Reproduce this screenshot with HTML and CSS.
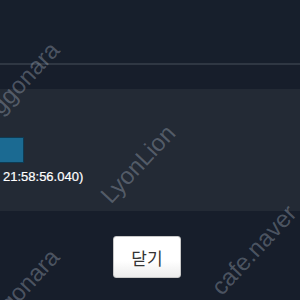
FILE: index.html
```html
<!DOCTYPE html>
<html lang="ko">
<head>
<meta charset="utf-8">
<link rel="stylesheet" href="styles.css">
</head>
<body>
<div class="modal">
  <div class="modal-header"></div>
  <div class="divider"></div>
  <div class="modal-body">
    <div class="panel">
      <div class="swatch"></div>
      <div class="time">21:58:56.040)</div>
    </div>
  </div>
  <div class="modal-footer">
    <button class="btn-close">닫기</button>
  </div>
</div>
<span class="wm wm-1">ggonara</span>
<span class="wm wm-2">LyonLion</span>
<span class="wm wm-3">cafe.naver</span>
<span class="wm wm-4">ggonara</span>
</body>
</html>
```
FILE: styles.css
```css
html, body {
  margin: 0;
  padding: 0;
}
body {
  width: 300px;
  height: 300px;
  overflow: hidden;
  position: relative;
  background: #171e2b;
  font-family: "Liberation Sans", "Noto Sans CJK KR", sans-serif;
}
.modal {
  display: flex;
  flex-direction: column;
}
.modal-header {
  height: 63px;
  background: #171f2c;
}
.divider {
  height: 2px;
  background: #2f3743;
}
.modal-body {
  padding-top: 24px;
}
.panel {
  height: 122px;
  box-sizing: border-box;
  padding-top: 48px;
  background: #232a35;
}
.swatch {
  width: 32px;
  height: 24px;
  margin-left: -10px;
  background: #1b6a92;
  border: 1px solid #0e3a52;
}
.time {
  margin-top: 7px;
  padding-left: 3px;
  color: #ffffff;
  font-size: 13px;
  line-height: 14px;
  -webkit-text-stroke: 0.2px #ffffff;
}
.modal-footer {
  display: flex;
  justify-content: center;
  padding-top: 25px;
  padding-right: 6px;
}
.btn-close {
  width: 68px;
  height: 42px;
  border: 1px solid #c8c8c8;
  border-radius: 3px;
  background: linear-gradient(#ffffff 60%, #ececec);
  color: #333333;
  font-family: "Noto Sans CJK KR", sans-serif;
  font-size: 17px;
  padding: 0;
}
.wm {
  position: absolute;
  color: rgba(190, 200, 215, 0.32);
  font-family: "Liberation Sans", sans-serif;
  font-size: 24px;
  white-space: nowrap;
  transform: translate(-50%, -50%) rotate(-47deg);
}
.wm-1 { left: 25px; top: 78px; }
.wm-2 { left: 138px; top: 164px; }
.wm-3 { left: 254px; top: 250px; }
.wm-4 { left: 25px; top: 285px; }
```
